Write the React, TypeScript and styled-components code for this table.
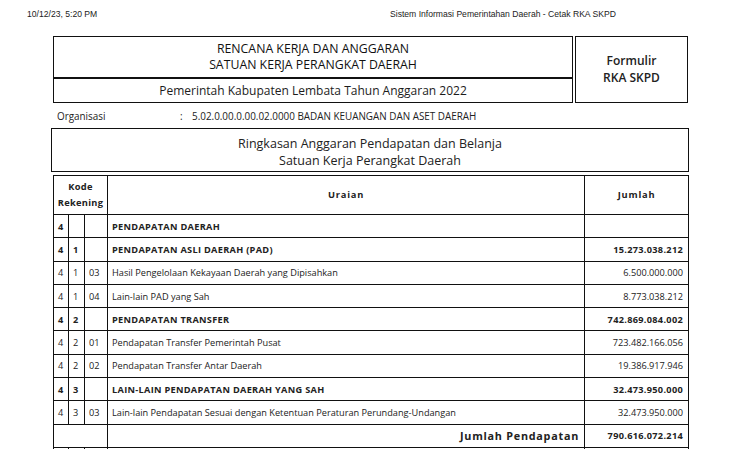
import React from "react";
import styled, { createGlobalStyle } from "styled-components";

const Global = createGlobalStyle`
  html, body { margin: 0; padding: 0; background: #fff; }
  body { font-family: "Open Sans", "Liberation Sans", sans-serif; color: #1c1c1c; }
`;

const Page = styled.div`
  width: 737px;
  height: 449px;
  overflow: hidden;
  position: relative;
`;

const TopBar = styled.div`
  display: grid;
  grid-template-columns: 363px auto;
  padding: 9px 0 0 27px;
  height: 27px;
  box-sizing: border-box;
  font-family: "Liberation Sans", Arial, sans-serif;
  font-size: 8.6px;
  color: #222;
`;

const HeaderRow = styled.div`
  display: flex;
  gap: 2px;
  margin-left: 53px;
  margin-top: 9px;
  height: 67px;
`;

const TitleBox = styled.div`
  width: 520px;
  border: 1px solid #111;
  box-sizing: border-box;
  display: flex;
  flex-direction: column;
`;

const TitleMain = styled.div`
  height: 40px;
  display: flex;
  flex-direction: column;
  align-items: center;
  justify-content: center;
  font-size: 12.3px;
  line-height: 16.5px;
  border-bottom: 2px solid #111;
  color: #111;
`;

const TitleSub = styled.div`
  flex: 1;
  display: flex;
  align-items: center;
  justify-content: center;
  font-size: 12px;
`;

const FormBox = styled.div`
  width: 113px;
  border: 1px solid #111;
  box-sizing: border-box;
  display: flex;
  flex-direction: column;
  align-items: center;
  justify-content: center;
  font-size: 12px;
  font-weight: 600;
  line-height: 16.5px;
  color: #222;
`;

const OrgRow = styled.div`
  display: grid;
  grid-template-columns: 123px 12px auto;
  margin: 7px 0 0 57px;
  font-size: 9.9px;
  height: 18px;
  line-height: 13px;
  color: #222;
`;

const SummaryBox = styled.div`
  margin-left: 51px;
  width: 638px;
  height: 44px;
  box-sizing: border-box;
  border: 1.5px solid #111;
  display: flex;
  flex-direction: column;
  align-items: center;
  justify-content: center;
  padding-top: 3px;
  font-size: 12.5px;
  line-height: 17px;
  color: #222;
`;

const Table = styled.table`
  margin: 3px 0 0 53px;
  width: 635px;
  border-collapse: collapse;
  table-layout: fixed;
  font-size: 9.2px;
  color: #222;
`;

const Th = styled.th<{ $spaced?: boolean }>`
  border: 1px solid #111;
  font-weight: 700;
  font-size: 9.3px;
  height: 38px;
  line-height: 16px;
  padding: 0;
  text-align: center;
  letter-spacing: ${(p) => (p.$spaced ? "0.8px" : "0.3px")};
`;

const Td = styled.td<{ $bold?: boolean; $right?: boolean }>`
  border: 1px solid #111;
  height: 22.3px;
  padding: 0 ${(p) => (p.$right ? "5px" : "0")} 0 ${(p) => (p.$right ? "0" : "4px")};
  font-weight: ${(p) => (p.$bold ? 700 : 400)};
  letter-spacing: ${(p) => (p.$bold ? "0.3px" : "0")};
  text-align: ${(p) => (p.$right ? "right" : "left")};
  white-space: nowrap;
  overflow: hidden;
`;

const TotalLabel = styled(Td)`
  font-size: 10.8px;
  letter-spacing: 0.75px;
`;

type Row = { k: string[]; u: string; j: string; b?: boolean };

const rows: Row[] = [
  { k: ["4", "", ""], u: "PENDAPATAN DAERAH", j: "", b: true },
  { k: ["4", "1", ""], u: "PENDAPATAN ASLI DAERAH (PAD)", j: "15.273.038.212", b: true },
  { k: ["4", "1", "03"], u: "Hasil Pengelolaan Kekayaan Daerah yang Dipisahkan", j: "6.500.000.000" },
  { k: ["4", "1", "04"], u: "Lain-lain PAD yang Sah", j: "8.773.038.212" },
  { k: ["4", "2", ""], u: "PENDAPATAN TRANSFER", j: "742.869.084.002", b: true },
  { k: ["4", "2", "01"], u: "Pendapatan Transfer Pemerintah Pusat", j: "723.482.166.056" },
  { k: ["4", "2", "02"], u: "Pendapatan Transfer Antar Daerah", j: "19.386.917.946" },
  { k: ["4", "3", ""], u: "LAIN-LAIN PENDAPATAN DAERAH YANG SAH", j: "32.473.950.000", b: true },
  { k: ["4", "3", "03"], u: "Lain-lain Pendapatan Sesuai dengan Ketentuan Peraturan Perundang-Undangan", j: "32.473.950.000" },
];

export default function App() {
  return (
    <Page>
      <Global />
      <TopBar>
        <span>10/12/23, 5:20 PM</span>
        <span>Sistem Informasi Pemerintahan Daerah - Cetak RKA SKPD</span>
      </TopBar>
      <HeaderRow>
        <TitleBox>
          <TitleMain>
            <span>RENCANA KERJA DAN ANGGARAN</span>
            <span>SATUAN KERJA PERANGKAT DAERAH</span>
          </TitleMain>
          <TitleSub>Pemerintah Kabupaten Lembata Tahun Anggaran 2022</TitleSub>
        </TitleBox>
        <FormBox>
          <span>Formulir</span>
          <span>RKA SKPD</span>
        </FormBox>
      </HeaderRow>
      <OrgRow>
        <span>Organisasi</span>
        <span>:</span>
        <span>5.02.0.00.0.00.02.0000 BADAN KEUANGAN DAN ASET DAERAH</span>
      </OrgRow>
      <SummaryBox>
        <span>Ringkasan Anggaran Pendapatan dan Belanja</span>
        <span>Satuan Kerja Perangkat Daerah</span>
      </SummaryBox>
      <Table>
        <colgroup>
          <col style={{ width: 15 }} />
          <col style={{ width: 16 }} />
          <col style={{ width: 23 }} />
          <col style={{ width: 477 }} />
          <col style={{ width: 104 }} />
        </colgroup>
        <thead>
          <tr>
            <Th colSpan={3}>
              Kode
              <br />
              Rekening
            </Th>
            <Th $spaced>Uraian</Th>
            <Th $spaced>Jumlah</Th>
          </tr>
        </thead>
        <tbody>
          {rows.map((r, i) => (
            <tr key={i}>
              {r.k.map((c, j) => (
                <Td key={j} $bold={r.b}>
                  {c}
                </Td>
              ))}
              <Td $bold={r.b}>{r.u}</Td>
              <Td $right $bold={r.b}>
                {r.j}
              </Td>
            </tr>
          ))}
          <tr>
            <Td colSpan={3} />
            <TotalLabel $right $bold>
              Jumlah Pendapatan
            </TotalLabel>
            <Td $right $bold>
              790.616.072.214
            </Td>
          </tr>
          <tr>
            <Td />
            <Td />
            <Td />
            <Td />
            <Td />
          </tr>
        </tbody>
      </Table>
    </Page>
  );
}
